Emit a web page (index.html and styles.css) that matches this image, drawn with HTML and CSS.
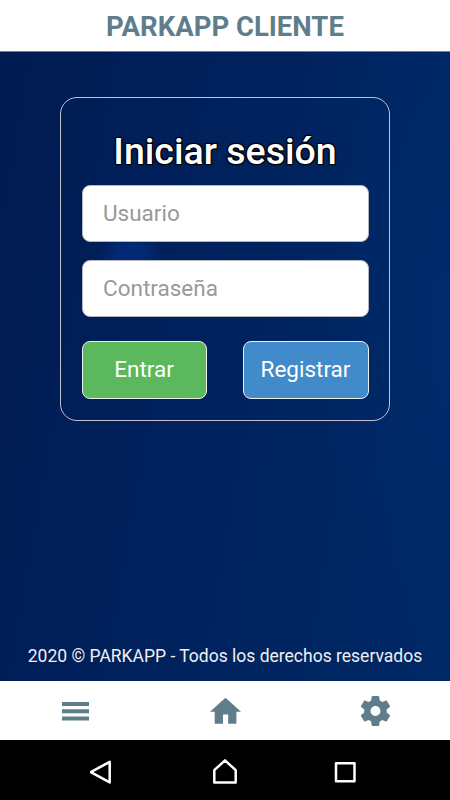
FILE: index.html
```
<!DOCTYPE html>
<html lang="es">
<head>
    <meta charset="UTF-8">
    <meta name="viewport" content="width=device-width, initial-scale=1.0">
    <title>ParkApp Cliente</title>
    <link rel="stylesheet" href="styles.css">
</head>
<body>
    <header class="header">PARKAPP CLIENTE</header>

    <main class="content">
        <form class="login">
            <h1 class="login-title">Iniciar sesión</h1>
            <input type="text" class="field" placeholder="Usuario">
            <input type="password" class="field" placeholder="Contraseña">
            <div class="buttons">
                <button type="button" class="button enter">Entrar</button>
                <button type="button" class="button register">Registrar</button>
            </div>
        </form>
        <p class="copyright">2020 © PARKAPP - Todos los derechos reservados</p>
    </main>

    <nav class="tabs">
        <a class="tab">
            <svg class="tab-icon" viewBox="0 0 36 36">
                <path d="M5 9h27v4H5zM5 16.3h27v4H5zM5 23.6h27v4H5z"/>
            </svg>
        </a>
        <a class="tab">
            <svg class="tab-icon" viewBox="0 0 36 36">
                <path d="M18.5 4.8L34 18.7h-4.6V30.8h-8.2v-9.2h-5.2v9.2H7.7V18.7H3z"/>
            </svg>
        </a>
        <a class="tab">
            <svg class="tab-icon" viewBox="-0.3 0 24 24">
                <path d="M19.43 12.98c.04-.32.07-.64.07-.98s-.03-.66-.07-.98l2.11-1.65c.19-.15.24-.42.12-.64l-2-3.46c-.12-.22-.39-.3-.61-.22l-2.49 1c-.52-.4-1.08-.73-1.69-.98l-.38-2.65C14.46 2.18 14.25 2 14 2h-4c-.25 0-.46.18-.49.42l-.38 2.65c-.61.25-1.17.59-1.69.98l-2.49-1c-.23-.09-.49 0-.61.22l-2 3.46c-.13.22-.07.49.12.64l2.11 1.65c-.04.32-.07.65-.07.98s.03.66.07.98l-2.11 1.65c-.19.15-.24.42-.12.64l2 3.46c.12.22.39.3.61.22l2.49-1c.52.4 1.08.73 1.69.98l.38 2.65c.03.24.24.42.49.42h4c.25 0 .46-.18.49-.42l.38-2.65c.61-.25 1.17-.59 1.69-.98l2.49 1c.23.09.49 0 .61-.22l2-3.46c.12-.22.07-.49-.12-.64l-2.11-1.65zM12 15.3c-1.82 0-3.3-1.48-3.3-3.3s1.48-3.3 3.3-3.3 3.3 1.48 3.3 3.3-1.48 3.3-3.3 3.3z"/>
            </svg>
        </a>
    </nav>

    <!-- Android navigation -->
    <div class="system-bar">
        <svg class="system-icon" viewBox="0 0 30 30">
            <path d="M19.7 4.8v20.6L.8 15.2z"/>
        </svg>
        <svg class="system-icon" viewBox="0 0 30 30">
            <path d="M4.3 25.5V13.2L15 3.4l10.7 9.8v12.3z"/>
        </svg>
        <svg class="system-icon" viewBox="0 0 30 30">
            <path d="M6 6.3h18.5v17.9H6z"/>
        </svg>
    </div>
</body>
</html>
```

FILE: styles.css
```
* {
    box-sizing: border-box;
}

body {
    font-family: Roboto, sans-serif;
    display: flex;
    flex-direction: column;
    height: 100vh;
    margin: 0;
    background-color: #ffffff;
}

.header {
    height: 52px;
    border-bottom: 1px solid #7b7d92;
    color: #607d8b;
    font-size: 27.5px;
    font-weight: bold;
    line-height: 54px;
    text-align: center;
}

.content {
    flex: 1;
    display: flex;
    flex-direction: column;
    align-items: center;
    justify-content: space-between;
    padding: 45px 0 14px;
    background:
        radial-gradient(ellipse 32px 24px at 131px 203px, rgba(0, 44, 125, 0.8) 40%, transparent),
        radial-gradient(ellipse 130px 420px at 450px 260px, rgba(0, 50, 120, 0.4), transparent),
        linear-gradient(100deg, #001b50, #00205b 35%, #002561 65%, #002866);
}

.login {
    width: 330px;
    height: 324px;
    padding: 31px 21px 0;
    border: 1px solid #c3bfcc;
    border-radius: 17px;
}

.login-title {
    margin: 0 0 11px;
    color: #ffffff;
    font-size: 37.5px;
    font-weight: 500;
    line-height: 45px;
    text-align: center;
    text-shadow: -1px -1px 1px #000, 1px -1px 1px #000, -1px 1px 1px #000, 1px 1px 1px #000;
}

.field {
    display: block;
    width: 287px;
    height: 57px;
    margin-bottom: 18px;
    padding: 0 20px 1px;
    border: 1px solid #b5b5bd;
    border-radius: 8px;
    background-color: #ffffff;
    font-family: inherit;
    font-size: 22.5px;
}

.field::placeholder {
    color: #999999;
}

.buttons {
    display: flex;
    justify-content: space-between;
    width: 287px;
    margin-top: 24px;
}

.button {
    width: 125px;
    height: 58px;
    padding: 0 1px 2px 0;
    border: 1.5px solid #eeeeee;
    border-radius: 8px;
    color: #ffffff;
    font-family: inherit;
    font-size: 22.5px;
}

.enter {
    background-color: #5cb85c;
}

.register {
    width: 126px;
    background-color: #428bca;
}

.copyright {
    margin: 0;
    color: #f0f0f0;
    font-size: 17.5px;
    line-height: 21px;
}

.tabs {
    display: flex;
    height: 59px;
}

.tab {
    flex: 1;
    display: flex;
    align-items: center;
    justify-content: center;
}

.tab-icon {
    width: 36px;
    height: 36px;
    fill: #607d8b;
}

.system-bar {
    display: flex;
    align-items: center;
    justify-content: center;
    gap: 90px;
    height: 60px;
    padding-top: 4px;
    background-color: #000000;
}

.system-icon {
    width: 30px;
    height: 30px;
    fill: none;
    stroke: #ffffff;
    stroke-width: 2.5;
    stroke-linejoin: round;
}
```
